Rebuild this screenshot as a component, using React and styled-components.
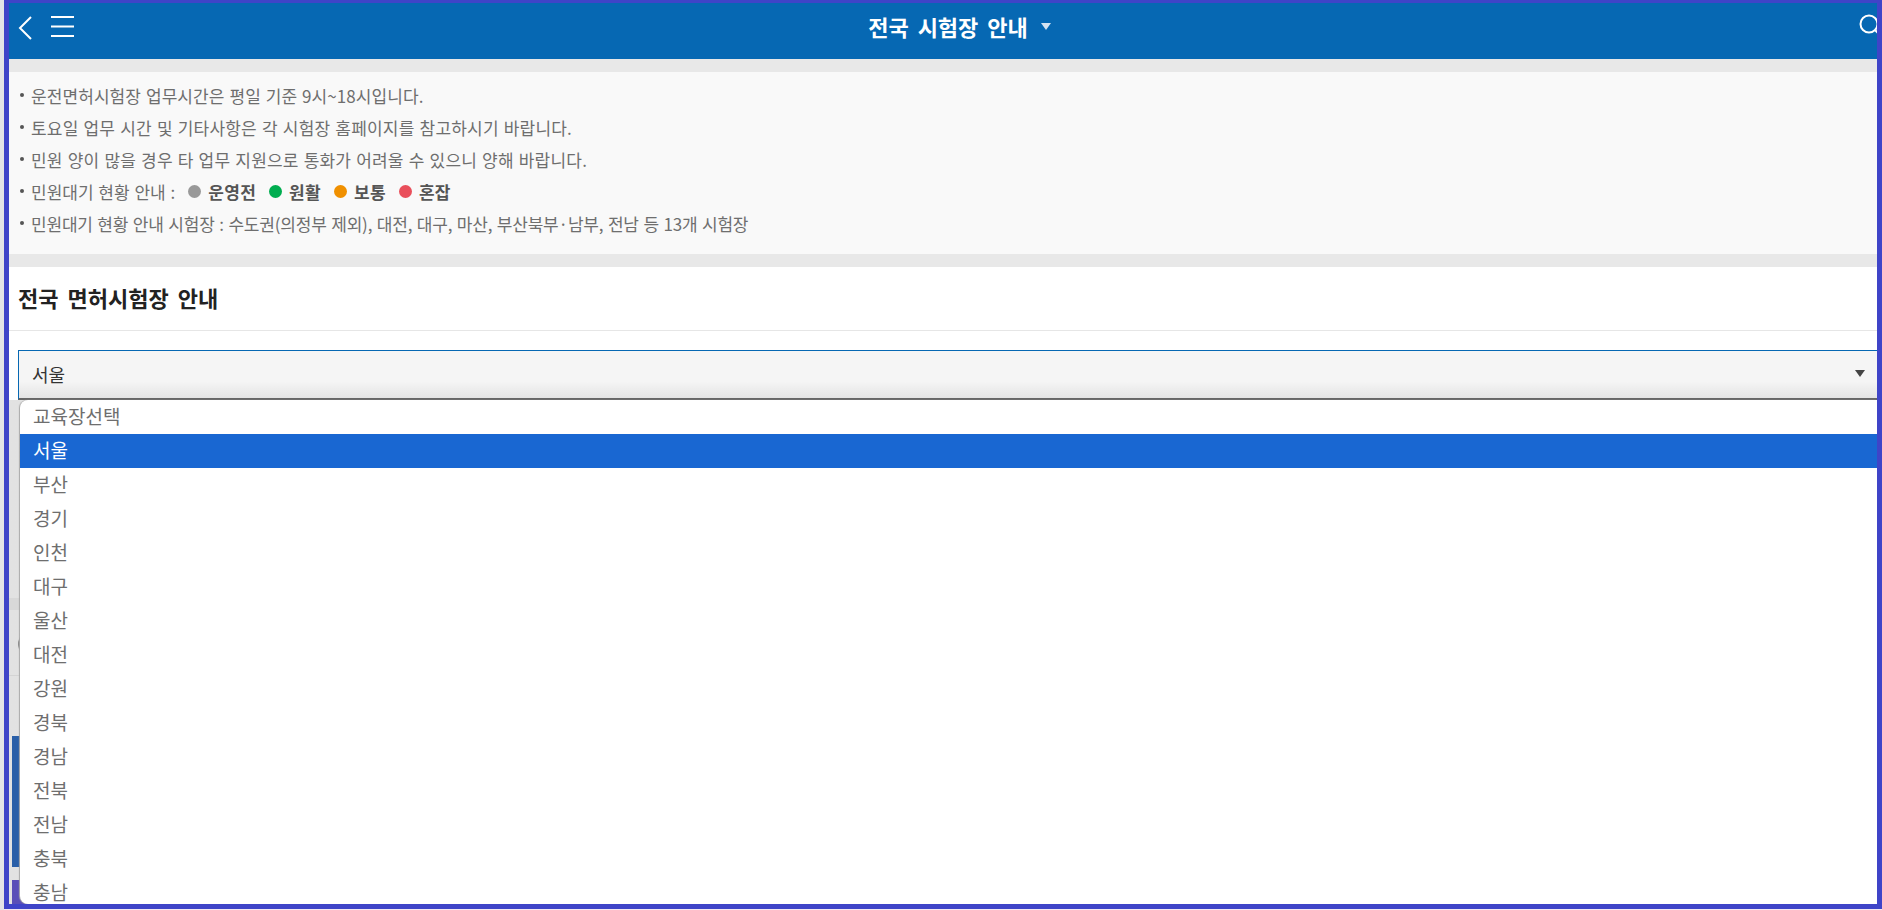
import styled, { createGlobalStyle } from 'styled-components';

const GlobalStyle = createGlobalStyle`
  html, body {
    margin: 0;
    padding: 0;
    height: 100%;
    overflow: hidden;
    background: #e4e4e6;
  }
  body {
    font-family: "Noto Sans CJK KR", "Noto Sans", sans-serif;
  }
`

const Frame = styled.div`
  box-sizing: border-box;
  width: 1878px;
  height: 909px;
  margin-left: 4px;
  border: solid #3f44c8;
  border-width: 3px 5px 5px 5px;
  box-shadow: 0 1px 0 #f3e6f2;
  background: #fff;
  overflow: hidden;
  position: relative;
  display: flex;
  flex-direction: column;
`
const Header = styled.header`
  flex: none;
  height: 56px;
  background: #0668b3;
  display: grid;
  grid-template-columns: 1fr auto 1fr;
  align-items: start;
  overflow: hidden;
`
const HeaderLeft = styled.div`
  display: flex;
  align-items: flex-start;
  gap: 19px;
  padding: 13px 0 0 9px;
`
const Title = styled.div`
  display: flex;
  align-items: center;
  gap: 13px;
  padding: 7px 0 0 33px;
  color: #fff;
  font-size: 22px;
  font-weight: 700;
  word-spacing: 4px;
  line-height: 32px;
  white-space: nowrap;
`
const Caret = styled.span`
  width: 0;
  height: 0;
  border-left: 5px solid transparent;
  border-right: 5px solid transparent;
  border-top: 7px solid ${p => p.color};
`
const SearchIcon = styled.svg`
  justify-self: end;
  margin: 11px -6px 0 0;
`
const Band = styled.div`
  flex: none;
  height: 13px;
  background: #e8e8e8;
`
const Notice = styled.ul`
  flex: none;
  box-sizing: border-box;
  height: 182px;
  margin: 0;
  padding: 7px 0 0 11px;
  list-style: none;
  background: #f9f9f9;
`
const NoticeItem = styled.li`
  display: flex;
  align-items: center;
  height: 32px;
  color: #6e6e6e;
  font-size: 17px;
  word-spacing: 1px;
  letter-spacing: ${p => p.$spacing || 0}px;
  white-space: pre;
  &::before {
    content: "";
    width: 4px;
    height: 4px;
    border-radius: 50%;
    background: #555;
    margin-right: 7px;
    flex: none;
  }
`
const Status = styled.span`
  display: inline-flex;
  align-items: center;
  gap: 7px;
  margin-left: 13px;
  color: #555;
  font-weight: 700;
  letter-spacing: 0.3px;
  &::before {
    content: "";
    width: 13px;
    height: 13px;
    border-radius: 50%;
    background: ${p => p.color};
  }
`
const SectionTitle = styled.h2`
  flex: none;
  box-sizing: border-box;
  height: 64px;
  margin: 0;
  padding: 0 0 3px 9px;
  display: flex;
  align-items: center;
  color: #222;
  font-size: 22px;
  font-weight: 700;
  word-spacing: 4px;
  border-bottom: 1px solid #e6e6e6;
`
const SelectBox = styled.div`
  flex: none;
  box-sizing: border-box;
  height: 50px;
  margin: 19px 0 0 9px;
  padding: 0 12px 2px 13px;
  display: flex;
  align-items: center;
  justify-content: space-between;
  color: #333;
  font-size: 18px;
  border: 1px solid #0668b3;
  border-bottom: 2px solid #666;
  border-right: 0;
  background: linear-gradient(#f5f5f5 0%, #f5f5f5 65%, #e4e4e4 100%);
`
// what the page shows in the thin strip left of the open list
const Under = styled.div`
  flex: 1;
  display: flex;
  flex-direction: column;
  background: linear-gradient(to right, #e2e2e2, #f4f4f4);
`
const UnderBand = styled.div`
  height: 12px;
  margin-top: 198px;
  background: #d8d8d8;
`
const UnderMarker = styled.div`
  width: 24px;
  height: 24px;
  margin: 22px 0 0 9px;
  border-radius: 50%;
  background: #888;
`
const UnderRule = styled.div`
  height: 1px;
  margin-top: 19px;
  background: #d4d4d4;
`
const UnderBlock = styled.div`
  height: ${p => p.$height}px;
  margin: ${p => p.$top}px 0 0 3px;
  background: ${p => p.color};
`
const Dropdown = styled.ul`
  position: absolute;
  left: 11px;
  right: 0;
  top: 397px;
  bottom: 0;
  margin: 0;
  padding: 0;
  list-style: none;
  overflow: hidden;
  background: #fff;
  border-radius: 8px 0 0 8px;
  box-shadow: -1px 0 1px #aaa;
`
const Option = styled.li`
  height: 34px;
  padding: 0 0 3px 13px;
  box-sizing: border-box;
  display: flex;
  align-items: center;
  font-size: 19px;
  color: ${p => p.$selected ? '#fff' : '#6e6e6e'};
  background: ${p => p.$selected ? '#1967d2' : 'transparent'};
`

const options = ['교육장선택', '서울', '부산', '경기', '인천', '대구', '울산', '대전', '강원', '경북', '경남', '전북', '전남', '충북', '충남']

const notices = [
  { text: '운전면허시험장 업무시간은 평일 기준 9시~18시입니다.', spacing: 0.08 },
  { text: '토요일 업무 시간 및 기타사항은 각 시험장 홈페이지를 참고하시기 바랍니다.', spacing: 0.2 },
  { text: '민원 양이 많을 경우 타 업무 지원으로 통화가 어려울 수 있으니 양해 바랍니다.', spacing: 0.2 },
]

const App = () => {
  return (
    <>
      <GlobalStyle />
      <Frame>
        <Header>
          <HeaderLeft>
            <svg width="14" height="24" viewBox="0 0 14 24" fill="none" stroke="#fff" strokeWidth="2">
              <path d="M13 1 L2 12 L13 23" />
            </svg>
            <svg width="23" height="21" viewBox="0 0 23 21" fill="none" stroke="#fff" strokeWidth="2">
              <path d="M0 1 H23 M0 10.5 H23 M0 20 H23" />
            </svg>
          </HeaderLeft>
          <Title>
            전국 시험장 안내
            <Caret color="#d5e3f1" />
          </Title>
          <SearchIcon width="24" height="24" viewBox="0 0 24 24" fill="none" stroke="#fff" strokeWidth="2">
            <circle cx="10" cy="10" r="8.5" />
            <path d="M16 16 L22 22" />
          </SearchIcon>
        </Header>
        <Band />
        <Notice>
          {notices.map(n => <NoticeItem key={n.text} $spacing={n.spacing}>{n.text}</NoticeItem>)}
          <NoticeItem>
            민원대기 현황 안내 :
            <Status color="#999">운영전</Status>
            <Status color="#00ad50">원활</Status>
            <Status color="#f09000">보통</Status>
            <Status color="#e94f5b">혼잡</Status>
          </NoticeItem>
          <NoticeItem $spacing={-0.2}>민원대기 현황 안내 시험장 : 수도권(의정부 제외), 대전, 대구, 마산, 부산북부·남부, 전남 등 13개 시험장</NoticeItem>
        </Notice>
        <Band />
        <SectionTitle>전국 면허시험장 안내</SectionTitle>
        <SelectBox>
          서울
          <Caret color="#444" />
        </SelectBox>
        <Under>
          <UnderBand />
          <UnderMarker />
          <UnderRule />
          <UnderBlock $top={60} $height={131} color="#2a5fa8" />
          <UnderBlock $top={13} $height={24} color="#5a4fb8" />
        </Under>
        <Dropdown>
          {options.map(name => (
            <Option key={name} $selected={name === '서울'}>{name}</Option>
          ))}
        </Dropdown>
      </Frame>
    </>
  )
}

export default App
